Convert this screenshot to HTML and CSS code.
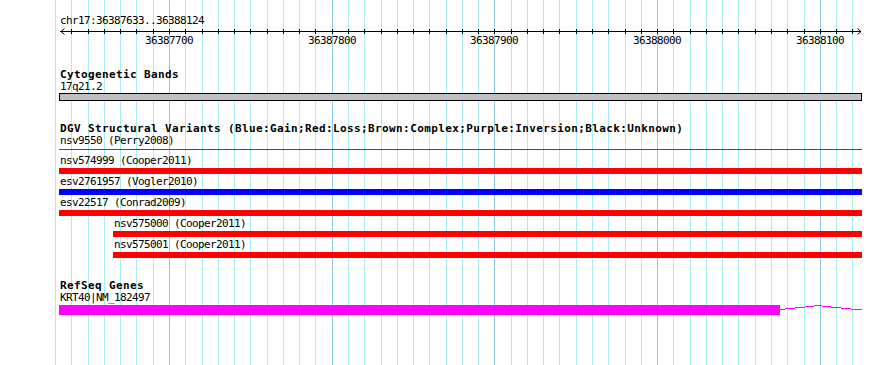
FILE: index.html
```html
<!DOCTYPE html>
<html lang="en">
<head>
<meta charset="utf-8">
<title>chr17:36387633..36388124</title>
<link rel="stylesheet" href="styles.css">
</head>
<body>
<div class="browser">
  <svg class="grid" width="890" height="365" viewBox="0 0 890 365" aria-hidden="true">
    <path class="grid-minor" d="M55.5 0V365M71.5 0V365M88.5 0V365M104.5 0V365M120.5 0V365M136.5 0V365M153.5 0V365M185.5 0V365M202.5 0V365M218.5 0V365M234.5 0V365M250.5 0V365M267.5 0V365M283.5 0V365M299.5 0V365M315.5 0V365M348.5 0V365M364.5 0V365M381.5 0V365M397.5 0V365M413.5 0V365M429.5 0V365M446.5 0V365M462.5 0V365M478.5 0V365M511.5 0V365M527.5 0V365M543.5 0V365M559.5 0V365M576.5 0V365M592.5 0V365M608.5 0V365M625.5 0V365M641.5 0V365M673.5 0V365M690.5 0V365M706.5 0V365M722.5 0V365M738.5 0V365M755.5 0V365M771.5 0V365M787.5 0V365M804.5 0V365M836.5 0V365M852.5 0V365"/>
    <path class="grid-major" d="M169.5 0V365M332.5 0V365M494.5 0V365M657.5 0V365M820.5 0V365"/>
  </svg>

  <div class="panel">
    <section class="ruler">
      <div class="ruler-label">chr17:36387633..36388124</div>
      <svg class="ruler-axis" width="890" height="7" viewBox="0 0 890 7" aria-hidden="true">
        <path class="axis-line" d="M60 3.5H861"/>
        <path class="axis-line" d="M64.5 0.5L61 3.5L64.5 6.5M857.5 0.5L861 3.5L857.5 6.5"/>
        <path class="axis-ticks" d="M71.5 1V6M88.5 1V6M104.5 1V6M120.5 1V6M136.5 1V6M153.5 1V6M169.5 1V6M185.5 1V6M202.5 1V6M218.5 1V6M234.5 1V6M250.5 1V6M267.5 1V6M283.5 1V6M299.5 1V6M315.5 1V6M332.5 1V6M348.5 1V6M364.5 1V6M381.5 1V6M397.5 1V6M413.5 1V6M429.5 1V6M446.5 1V6M462.5 1V6M478.5 1V6M494.5 1V6M511.5 1V6M527.5 1V6M543.5 1V6M559.5 1V6M576.5 1V6M592.5 1V6M608.5 1V6M625.5 1V6M641.5 1V6M657.5 1V6M673.5 1V6M690.5 1V6M706.5 1V6M722.5 1V6M738.5 1V6M755.5 1V6M771.5 1V6M787.5 1V6M804.5 1V6M820.5 1V6M836.5 1V6M852.5 1V6"/>
      </svg>
      <div class="ruler-scale">
        <span class="tick-label" style="left:145px">36387700</span>
        <span class="tick-label" style="left:308px">36387800</span>
        <span class="tick-label" style="left:470px">36387900</span>
        <span class="tick-label" style="left:633px">36388000</span>
        <span class="tick-label" style="left:796px">36388100</span>
      </div>
    </section>

    <section class="track">
      <h2 class="track-title">Cytogenetic Bands</h2>
      <div class="feature" style="margin-left:59px;width:803px">
        <div class="feature-label">17q21.2</div>
        <div class="band"></div>
      </div>
    </section>

    <section class="track">
      <h2 class="track-title">DGV Structural Variants (Blue:Gain;Red:Loss;Brown:Complex;Purple:Inversion;Black:Unknown)</h2>
      <div class="feature" style="margin-left:59px;width:803px">
        <div class="feature-label">nsv9550 (Perry2008)</div>
        <div class="sv-line loss"></div>
      </div>
      <div class="feature" style="margin-left:59px;width:803px">
        <div class="feature-label">nsv574999 (Cooper2011)</div>
        <div class="sv-bar loss"></div>
      </div>
      <div class="feature" style="margin-left:59px;width:803px">
        <div class="feature-label">esv2761957 (Vogler2010)</div>
        <div class="sv-bar gain"></div>
      </div>
      <div class="feature" style="margin-left:59px;width:803px">
        <div class="feature-label">esv22517 (Conrad2009)</div>
        <div class="sv-bar loss"></div>
      </div>
      <div class="feature" style="margin-left:113px;width:749px">
        <div class="feature-label">nsv575000 (Cooper2011)</div>
        <div class="sv-bar loss"></div>
      </div>
      <div class="feature" style="margin-left:113px;width:749px">
        <div class="feature-label">nsv575001 (Cooper2011)</div>
        <div class="sv-bar loss"></div>
      </div>
    </section>

    <section class="track track-genes">
      <h2 class="track-title">RefSeq Genes</h2>
      <div class="feature" style="margin-left:59px;width:803px">
        <div class="feature-label">KRT40|NM_182497</div>
        <div class="gene">
          <div class="exon" style="width:721px"></div>
          <svg class="intron" width="82" height="10" viewBox="0 0 82 10" aria-hidden="true">
            <polyline points="0,4.5 10,3.5 20,2.5 30,1.5 38,0.5 46,1.5 56,2.5 66,3.5 76,4.5 82,4.5"/>
          </svg>
        </div>
      </div>
    </section>
  </div>
</div>
</body>
</html>
```

FILE: styles.css
```css
html, body {
  margin: 0;
  padding: 0;
  background: #ffffff;
}

.browser {
  position: relative;
  width: 890px;
  height: 365px;
  overflow: hidden;
  font-family: "DejaVu Sans Mono", "Liberation Mono", monospace;
  font-size: 11px;
  letter-spacing: -0.62px;
  color: #000000;
}

.grid {
  position: absolute;
  left: 0;
  top: 0;
  z-index: 0;
}

.grid-minor {
  stroke: #aaedf0;
  stroke-width: 1;
  shape-rendering: crispEdges;
}

.grid-major {
  stroke: #8ec8e8;
  stroke-width: 1;
  shape-rendering: crispEdges;
}

.panel {
  position: relative;
  z-index: 1;
}

.ruler {
  padding-top: 15px;
}

.ruler-label {
  height: 12px;
  line-height: 12px;
  padding-left: 60px;
  white-space: nowrap;
}

.ruler-axis {
  display: block;
  margin-top: 1px;
}

.axis-line {
  fill: none;
  stroke: #000000;
  stroke-width: 1;
}

.axis-line:first-child {
  shape-rendering: crispEdges;
}

.axis-ticks {
  stroke: #000000;
  stroke-width: 1;
  shape-rendering: crispEdges;
}

.ruler-scale {
  position: relative;
  height: 12px;
  line-height: 12px;
}

.tick-label {
  position: absolute;
  top: 0;
  white-space: nowrap;
}

.track {
  margin-top: 21px;
}

.track-title {
  margin: 0;
  height: 13px;
  padding-left: 60px;
  font-size: 11px;
  font-weight: bold;
  letter-spacing: 0.38px;
  line-height: 13px;
  white-space: nowrap;
}

.feature {
  display: flex;
  flex-direction: column;
}

.feature-label {
  height: 12px;
  padding-left: 1px;
  line-height: 12px;
  white-space: nowrap;
}

.band {
  height: 6px;
  border: 1px solid #000000;
  background: #c0c0c0;
}

.sv-line {
  height: 1px;
  margin: 2px 0 5px;
}

.sv-bar {
  height: 6px;
  margin: 1px 0 2px;
}

.loss {
  background: #ff0000;
}

.gain {
  background: #0000ff;
}

.track-genes {
  margin-top: 20px;
}

.track-genes .track-title {
  height: 12px;
  line-height: 12px;
}

.gene {
  display: flex;
  align-items: flex-start;
  height: 10px;
  margin-top: 1px;
}

.exon {
  height: 10px;
  background: #ff00ff;
}

.intron {
  display: block;
}

.intron polyline {
  fill: none;
  stroke: #ff00ff;
  stroke-width: 1;
  shape-rendering: crispEdges;
}
```
